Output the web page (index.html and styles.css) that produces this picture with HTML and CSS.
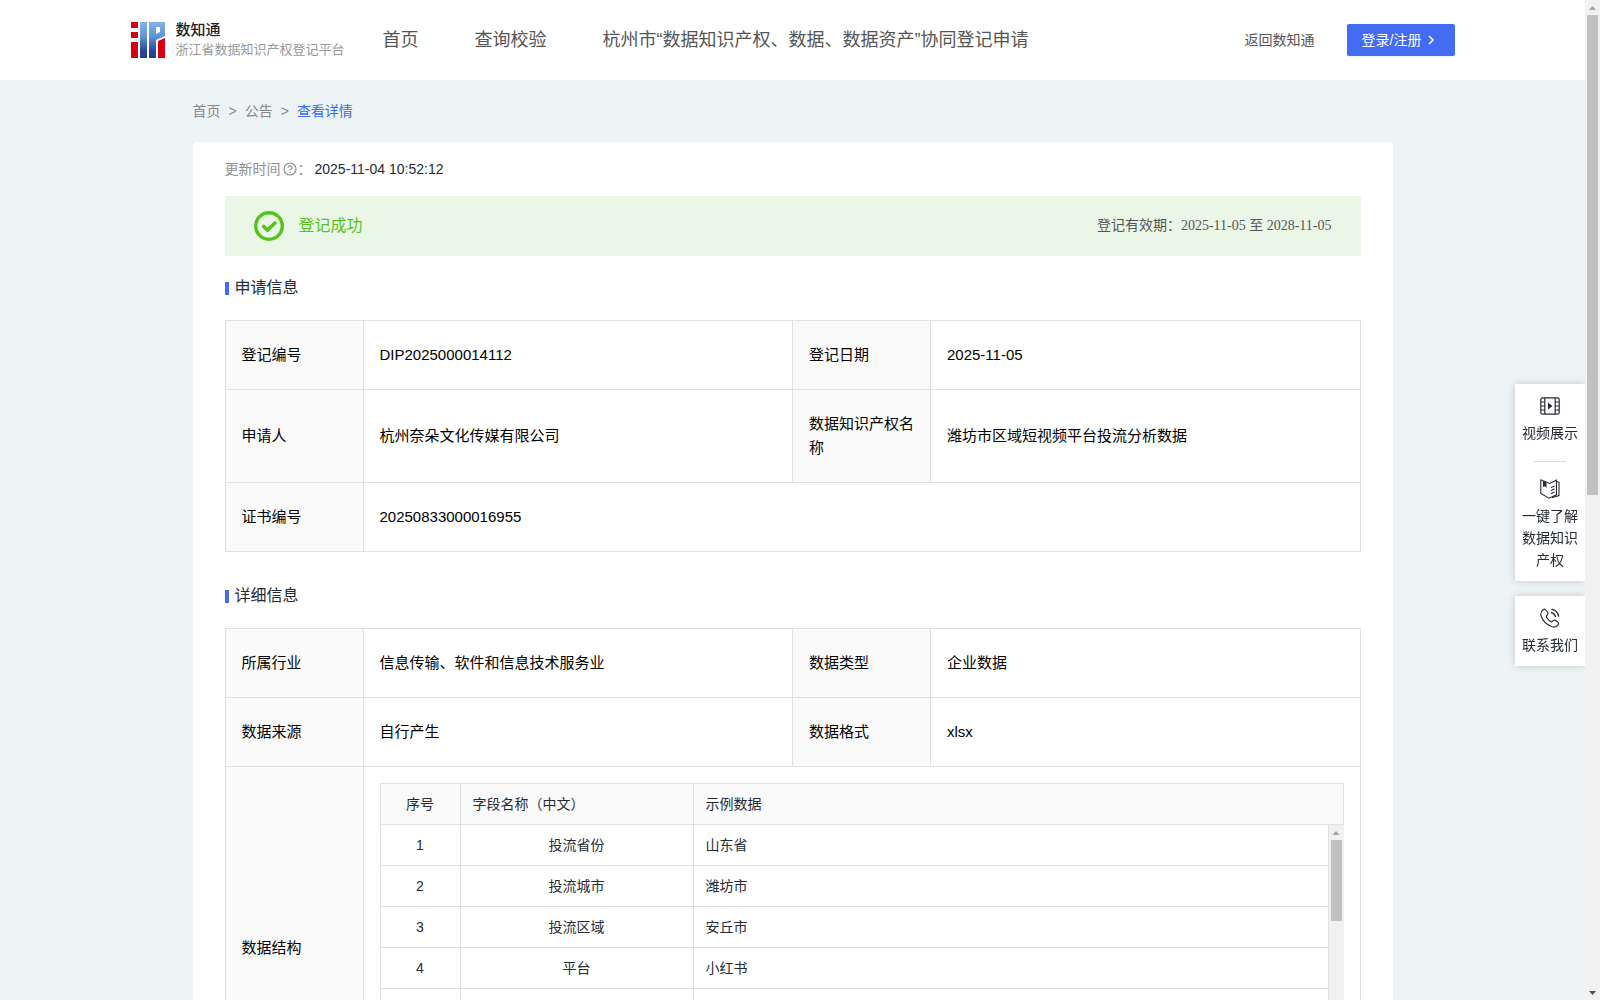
FILE: index.html
```html
<!DOCTYPE html>
<html lang="zh-CN">
<head>
<meta charset="UTF-8" />
<meta name="viewport" content="width=device-width, initial-scale=1" />
<title>数知通 - 查看详情</title>
<link rel="stylesheet" href="styles.css">
</head>
<body>
  <div class="page">
    <!-- Header -->
    <header class="header">
      <div class="header-inner">
        <a class="brand" href="#">
          <svg class="brand-logo" viewBox="0 0 34 36" aria-hidden="true">
            <defs>
              <linearGradient id="blue" x1="0" y1="0" x2="0" y2="36" gradientUnits="userSpaceOnUse">
                <stop offset="0" stop-color="#82b4e6" />
                <stop offset=".4" stop-color="#5f95d6" />
                <stop offset=".8" stop-color="#29479a" />
                <stop offset="1" stop-color="#243a88" />
              </linearGradient>
            </defs>
            <path fill="#d7000f" d="M0 0h7v6H0zM0 10h7v6H0zM0 20h7v16H0zM27 19l7-3v20h-7z" />
            <path fill="url(#blue)" d="M9 0h7v36H9zM18 0h16v14l-9 4v18h-7zM25 5v7l4-2V5z" fill-rule="evenodd" />
          </svg>
          <span class="brand-text">
            <strong>数知通</strong>
            <span>浙江省数据知识产权登记平台</span>
          </span>
        </a>
        <nav class="nav">
          <a href="#">首页</a>
          <a href="#">查询校验</a>
          <a href="#">杭州市“数据知识产权、数据、数据资产”协同登记申请</a>
        </nav>
        <div class="header-actions">
          <a href="#">返回数知通</a>
          <button class="login-btn" type="button">登录/注册
            <svg width="14" height="14" viewBox="0 0 14 14" aria-hidden="true"><path d="M4 3l4 4-4 4" fill="none" stroke="currentColor" stroke-width="1.5" /></svg>
          </button>
        </div>
      </div>
    </header>

    <main class="container">
      <nav class="breadcrumb" aria-label="breadcrumb">
        <a href="#">首页</a>
        <span>&gt;</span>
        <a href="#">公告</a>
        <span>&gt;</span>
        <a class="current" href="#">查看详情</a>
      </nav>

      <div class="card">
        <div class="update-time">
          <span>更新时间</span>
          <svg width="16" height="14" viewBox="0 0 16 14" aria-hidden="true">
            <g fill="none" stroke="currentColor" stroke-width="1.2">
              <circle cx="8" cy="7" r="6" />
              <path d="M6 5.8a2 1.9 0 1 1 2.7 1.7q-.7.3-.7 1.1" />
            </g>
            <circle cx="8" cy="10.2" r=".8" fill="currentColor" />
          </svg>
          <span>：</span>
          <time>2025-11-04 10:52:12</time>
        </div>

        <div class="status">
          <svg width="30" height="30" viewBox="0 0 30 30" aria-hidden="true">
            <g fill="none" stroke="currentColor">
              <circle cx="15" cy="15" r="13.3" stroke-width="3.4" />
              <path d="M8.5 14.5l5 4.5 8.500-8" stroke-width="3.6" />
            </g>
          </svg>
          <span class="status-text">登记成功</span>
          <span class="status-period">登记有效期：2025-11-05 至 2028-11-05</span>
        </div>

        <!-- Application info -->
        <h2 class="section-title">申请信息</h2>
        <table class="info">
          <colgroup><col class="label-col"><col><col class="label-col"><col></colgroup>
          <tr>
            <th scope="row">登记编号</th>
            <td>DIP2025000014112</td>
            <th scope="row">登记日期</th>
            <td>2025-11-05</td>
          </tr>
          <tr>
            <th scope="row">申请人</th>
            <td>杭州奈朵文化传媒有限公司</td>
            <th scope="row">数据知识产权名称</th>
            <td>潍坊市区域短视频平台投流分析数据</td>
          </tr>
          <tr>
            <th scope="row">证书编号</th>
            <td colspan="3">20250833000016955</td>
          </tr>
        </table>

        <!-- Detail info -->
        <h2 class="section-title">详细信息</h2>
        <table class="info">
          <colgroup><col class="label-col"><col><col class="label-col"><col></colgroup>
          <tr>
            <th scope="row">所属行业</th>
            <td>信息传输、软件和信息技术服务业</td>
            <th scope="row">数据类型</th>
            <td>企业数据</td>
          </tr>
          <tr>
            <th scope="row">数据来源</th>
            <td>自行产生</td>
            <th scope="row">数据格式</th>
            <td>xlsx</td>
          </tr>
          <tr>
            <th scope="row">数据结构</th>
            <td class="nested" colspan="3">
              <table class="fields fields-head">
                <colgroup><col class="no-col"><col class="name-col"><col></colgroup>
                <tr><th>序号</th><th>字段名称（中文）</th><th>示例数据</th></tr>
              </table>
              <div class="fields-body">
                <table class="fields">
                  <colgroup><col class="no-col"><col class="name-col"><col></colgroup>
                  <tr><td>1</td><td>投流省份</td><td>山东省</td></tr>
                  <tr><td>2</td><td>投流城市</td><td>潍坊市</td></tr>
                  <tr><td>3</td><td>投流区域</td><td>安丘市</td></tr>
                  <tr><td>4</td><td>平台</td><td>小红书</td></tr>
                  <tr><td></td><td></td><td></td></tr>
                  <tr><td></td><td></td><td></td></tr>
                  <tr><td></td><td></td><td></td></tr>
                </table>
                <div class="scrollbar" aria-hidden="true">
                  <i class="arrow up"></i>
                  <i class="thumb fields-thumb"></i>
                </div>
              </div>
            </td>
          </tr>
        </table>
      </div>
    </main>
  </div>

  <div class="scrollbar" aria-hidden="true">
    <i class="arrow up"></i>
    <i class="thumb page-thumb"></i>
    <i class="arrow down"></i>
  </div>

  <!-- Floating shortcuts -->
  <aside class="side">
    <div class="side-box">
      <a href="#">
        <svg width="20" height="20" viewBox="0 0 20 20" aria-hidden="true">
          <g fill="none" stroke="currentColor" stroke-width="1.2">
            <rect x=".8" y="1.8" width="18.4" height="16.4" rx="1.8" />
            <path d="M4.8 2v16M15.2 2v16M1 6h4M1 10h4M1 14h4M15 6h4M15 10h4M15 14h4" />
          </g>
          <path d="M8 6.5l4.500 3.500L8 13.500z" fill="currentColor" />
        </svg>
        <span>视频展示</span>
      </a>
      <hr>
      <a href="#">
        <svg width="20" height="20" viewBox="0 0 20 20" aria-hidden="true">
          <g fill="none" stroke="currentColor" stroke-width="1.1">
            <path d="M3 1.500L.8 1v13.500l8.200 4.700 7.500-3.400V1.200L9.500 4.500 6.500 3" />
            <path d="M16.500 2.800l2.500.4v13.300l-7 2.300M11 8.500l3.500-1.500M11 11.500l3.500-1.500M11 14.500l3.500-1.500" />
          </g>
          <path d="M3 1.200L6.500 2.500V9L4.800 7.300 3 8z" fill="currentColor" />
        </svg>
        <span>一键了解数据知识产权</span>
      </a>
    </div>
    <div class="side-box">
      <a href="#">
        <svg width="20" height="20" viewBox="0 0 20 20" aria-hidden="true">
          <g fill="none" stroke="currentColor" stroke-width="1.1">
            <path d="M3 1.800q1.500-1.300 2.800.2l1.800 2.500q.9 1.400-.4 2.500-1.500 1.200-.6 2.600 1.500 2.600 4 4 1.300.7 2.400-.7 1-1.300 2.500-.4l2.200 1.500q1.500 1.200.4 2.600-2.100 3.300-6.100 2.200Q3.500 15.500.9 7.500.3 4 3 1.800z" />
            <path d="M11 4.500q3.800.8 4.600 4.700M11.500 1.200q6 1.300 7.300 7.500" stroke-width="1.300" />
          </g>
        </svg>
        <span>联系我们</span>
      </a>
    </div>
  </aside>
</body>
</html>
```
FILE: styles.css
```css
* {
  box-sizing: border-box;
}

body {
  margin: 0;
  height: 100vh;
  display: flex;
  overflow: hidden;
  background: #eef3f6;
  color: #262a35;
  font-family: "Liberation Sans", "Noto Sans CJK SC", sans-serif;
  font-size: 14px;
  line-height: 22px;
}

a {
  color: inherit;
  text-decoration: none;
}

svg {
  display: block;
  flex: none;
}

.page {
  flex: 1;
  min-width: 0;
  overflow: hidden;
}

/* Header */
.header {
  background: #fff;
}

.header-inner {
  display: flex;
  align-items: center;
  max-width: 1324px;
  height: 80px;
  margin: 0 auto;
  color: #555;
}

.brand {
  display: flex;
  align-items: center;
  gap: 11px;
}

.brand-logo {
  width: 34px;
  height: 36px;
}

.brand-text {
  display: flex;
  flex-direction: column;
  color: #999;
  font-size: 13px;
  line-height: 20px;
  white-space: nowrap;
}

.brand-text strong {
  color: #222;
  font-size: 15px;
  font-weight: 500;
}

.nav {
  display: flex;
  gap: 56px;
  margin-left: 38px;
  font-size: 18px;
  white-space: nowrap;
}

.header-actions {
  display: flex;
  align-items: center;
  gap: 32px;
  margin-left: auto;
  white-space: nowrap;
}

.login-btn {
  display: flex;
  align-items: center;
  gap: 4px;
  width: 108px;
  height: 32px;
  padding: 0 15px;
  border: none;
  border-radius: 2px;
  background: #436cf3;
  box-shadow: 0 2px 0 rgba(0, 0, 0, 0.04);
  color: #fff;
  font: inherit;
  cursor: pointer;
}

/* Content */
.container {
  max-width: 1200px;
  margin: 0 auto;
}

.breadcrumb {
  display: flex;
  gap: 8px;
  padding: 20px 0;
  color: #888;
}

.breadcrumb .current {
  color: #3a6af5;
}

.card {
  padding: 16px 32px 32px;
  border-radius: 4px;
  background: #fff;
}

.update-time {
  display: flex;
  align-items: center;
  margin-bottom: 16px;
  color: #8f8f94;
}

.update-time svg {
  margin-left: 1px;
}

.update-time time {
  margin-left: 3px;
  color: #262a35;
}

.status {
  display: flex;
  align-items: center;
  height: 60px;
  margin-bottom: 20px;
  padding: 0 29px;
  background: #ebf7e6;
  color: #52c41a;
}

.status-text {
  margin-left: 15px;
  font-size: 16px;
}

.status-period {
  margin-left: auto;
  color: #555;
  font-family: "Liberation Serif", "Noto Sans CJK SC", serif;
}

.section-title {
  display: flex;
  align-items: center;
  gap: 6px;
  margin: 0 0 20px;
  font-size: 16px;
  font-weight: 400;
  line-height: 24px;
}

.section-title::before {
  content: "";
  width: 4px;
  height: 13px;
  background: #436cf3;
}

/* Tables */
table {
  width: 100%;
  border-collapse: collapse;
  table-layout: fixed;
}

th,
td {
  border: 1px solid #e1e1e1;
  font-weight: 400;
  text-align: left;
}

.info {
  margin-bottom: 32px;
  color: #000;
  font-size: 15px;
  line-height: 24px;
}

.info th,
.info td {
  padding: 22px 15px 22px 16px;
}

.info th {
  background: #fafafa;
}

.label-col {
  width: 138px;
}

.info .nested {
  padding: 16px;
}

.fields {
  color: #262a35;
  font-size: 14px;
}

.info .fields th,
.info .fields td {
  height: 41px;
  padding: 8px 12px;
}

.fields th:first-child,
.fields td:first-child,
.fields td:nth-child(2) {
  text-align: center;
}

.no-col {
  width: 80px;
}

.name-col {
  width: 233px;
}

.fields-body {
  display: flex;
  height: 288px;
  overflow: hidden;
}

.info .fields-body tr:first-child td {
  height: 40px;
  padding: 7px 12px;
  border-top: none;
}

/* Scrollbars */
.scrollbar {
  display: flex;
  flex: none;
  flex-direction: column;
  align-items: center;
  width: 15px;
  background: #f1f1f1;
}

.arrow {
  width: 7px;
  height: 4px;
  margin: 6px 0 5px;
  background: #a3a3a3;
}

.up {
  clip-path: polygon(50% 0, 100% 100%, 0 100%);
}

.down {
  margin-top: auto;
  background: #505050;
  clip-path: polygon(0 0, 100% 0, 50% 100%);
}

.thumb {
  width: 11px;
  background: #c1c1c1;
}

.page-thumb {
  height: 48%;
}

.fields-thumb {
  height: 81px;
}

/* Floating shortcuts */
.side {
  position: fixed;
  top: 374px;
  right: 15px;
  overflow: hidden;
  padding: 10px 0 10px 10px;
}

.side-box {
  width: 70px;
  padding: 12px 7px 10px;
  background: #fff;
  box-shadow: 0 0 8px rgba(0, 0, 0, 0.18);
}

.side-box + .side-box {
  margin-top: 15px;
}

.side-box a {
  display: flex;
  flex-direction: column;
  align-items: center;
  gap: 6px;
  text-align: center;
}

.side-box hr {
  width: 32px;
  margin: 17px auto;
  border: none;
  border-top: 1px solid #ddd;
}
```
